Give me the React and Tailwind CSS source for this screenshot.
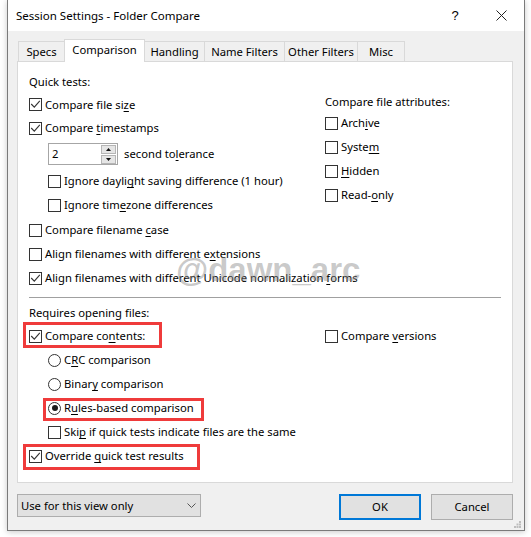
import React from "react";

function U({ children }) {
  return <span className="underline decoration-1 underline-offset-[2px]">{children}</span>;
}

function Box({ checked }) {
  return (
    <span className="w-[13px] h-[13px] border border-[#333333] bg-white flex items-center justify-center shrink-0">
      {checked && (
        <svg width="11" height="11" viewBox="0 0 11 11">
          <path d="M1.2 5 L4.3 8.2 L9.8 1.8" fill="none" stroke="#333333" strokeWidth="1.1" />
        </svg>
      )}
    </span>
  );
}

function Radio({ checked }) {
  return (
    <span className="w-[13px] h-[13px] rounded-full border border-[#333333] bg-white flex items-center justify-center shrink-0">
      {checked && <span className="w-[6px] h-[6px] rounded-full bg-[#1a1a1a]" />}
    </span>
  );
}

function Check({ checked, children, className = "", h = "h-[24px]" }) {
  return (
    <div className={`flex items-center ${h} ${className}`}>
      <Box checked={checked} />
      <span className="ml-[3px] whitespace-nowrap">{children}</span>
    </div>
  );
}

function RadioRow({ checked, children, className = "" }) {
  return (
    <div className={`flex items-center h-[24px] ${className}`}>
      <Radio checked={checked} />
      <span className="ml-[3px] whitespace-nowrap">{children}</span>
    </div>
  );
}

function Tab({ children, className }) {
  return (
    <div className={`flex items-center justify-center whitespace-nowrap ${className}`}>{children}</div>
  );
}

export default function App() {
  return (
    <div className="w-[531px] h-[537px] bg-white font-['Noto_Sans',sans-serif] text-[11.25px] text-black leading-none overflow-hidden">
      <div className="ml-[7px] w-[518px] h-[531px] border-x border-b border-[#7a7a7a] flex flex-col bg-[#f0f0f0] relative shadow-[0_1px_6px_rgba(0,0,0,0.22)]">
        {/* Title bar */}
        <div className="h-[31px] bg-white flex items-center shrink-0">
          <div className="pl-[8px] flex-1 text-[11.5px] whitespace-nowrap">Session Settings - Folder Compare</div>
          <div className="w-[46px] h-full flex items-center justify-center text-[13px] font-['DejaVu_Sans',sans-serif] pb-[1px]">
            <span className="font-['Liberation_Sans',sans-serif] text-[13px]">?</span>
          </div>
          <div className="w-[46px] h-full flex items-center justify-center">
            <svg width="11" height="11" viewBox="0 0 11 11">
              <path d="M0.5 0.5 L10.5 10.5 M10.5 0.5 L0.5 10.5" stroke="#222222" strokeWidth="1" />
            </svg>
          </div>
        </div>

        {/* Body */}
        <div className="flex flex-col pl-[9px] pr-[11px] pt-[8px]">
          {/* Tabs */}
          <div className="flex items-end h-[22px] pl-[1px]">
            <Tab className="w-[46px] h-[20px] border-t border-l border-[#d9d9d9] bg-[#f0f0f0]">Specs</Tab>
            <Tab className="w-[81px] h-[23px] -mb-px relative z-10 border-t border-x border-[#d9d9d9] bg-white pb-[2px]">Comparison</Tab>
            <Tab className="w-[59px] h-[20px] border-t border-[#d9d9d9] bg-[#f0f0f0]">Handling</Tab>
            <Tab className="w-[80px] h-[20px] border-t border-l border-[#d9d9d9] bg-[#f0f0f0]">Name Filters</Tab>
            <Tab className="w-[73px] h-[20px] border-t border-l border-[#d9d9d9] bg-[#f0f0f0]">Other Filters</Tab>
            <Tab className="w-[48px] h-[20px] border-t border-x border-[#d9d9d9] bg-[#f0f0f0]">Misc</Tab>
          </div>

          {/* Panel */}
          <div className="h-[422px] border border-[#d9d9d9] bg-white relative pl-[11px] pr-[11px] flex flex-col">
            <div className="flex">
              <div className="w-[296px] pt-[8px] flex flex-col">
                <div className="h-[23px] flex items-center">Quick tests:</div>
                <Check checked h="h-[23px]">
                  Compare file si<U>z</U>e
                </Check>
                <Check checked>
                  Compare <U>t</U>imestamps
                </Check>
                <div className="mt-[3px] h-[22px] ml-[19px] flex items-center">
                  <div className="w-[70px] h-[22px] border border-[#a6a6a6] bg-white flex items-center justify-between pl-[3px] pr-[1px]">
                    <span>2</span>
                    <div className="flex flex-col gap-[1px]">
                      <div className="w-[15px] h-[9px] bg-[#e5e5e5] border border-[#b5b5b5] flex items-center justify-center">
                        <svg width="5" height="3" viewBox="0 0 5 3"><path d="M0 3 L2.5 0 L5 3 Z" fill="#111111" /></svg>
                      </div>
                      <div className="w-[15px] h-[9px] bg-[#e5e5e5] border border-[#b5b5b5] flex items-center justify-center">
                        <svg width="5" height="3" viewBox="0 0 5 3"><path d="M0 0 L2.5 3 L5 0 Z" fill="#111111" /></svg>
                      </div>
                    </div>
                  </div>
                  <span className="ml-[6px] whitespace-nowrap">
                    second to<U>l</U>erance
                  </span>
                </div>
                <Check className="mt-[4px] ml-[19px]">
                  Ignore dayli<U>g</U>ht saving difference (1 hour)
                </Check>
                <Check className="ml-[19px]">
                  Ignore tim<U>e</U>zone differences
                </Check>
              </div>
              <div className="pt-[30px] flex flex-col">
                <div className="h-[19px] flex items-center whitespace-nowrap">Compare file attributes:</div>
                <Check>
                  Arch<U>i</U>ve
                </Check>
                <Check>
                  Syste<U>m</U>
                </Check>
                <Check>
                  <U>H</U>idden
                </Check>
                <Check>
                  Read-<U>o</U>nly
                </Check>
              </div>
            </div>

            <Check className="mt-[1px]">
              Compare filename <U>c</U>ase
            </Check>
            <Check>
              Align filenames with different e<U>x</U>tensions
            </Check>
            <Check checked>
              Align filenames with different Unicode normalization <U>f</U>orms
            </Check>

            <div className="mt-[7px] h-px bg-[#a0a0a0]" />

            <div className="mt-[4px] h-[22px] flex items-center">Requires opening files:</div>

            <div className="flex">
              <div className="w-[296px] flex flex-col">
                <div className="relative">
                  <Check checked>
                    Compare co<U>n</U>tents:
                  </Check>
                  <span className="absolute left-[-6px] top-[-2px] w-[139px] h-[26px] border-[3px] border-[#ef3b3b]" />
                </div>
                <RadioRow className="ml-[19px]">
                  C<U>R</U>C comparison
                </RadioRow>
                <RadioRow className="ml-[19px]">
                  Binar<U>y</U> comparison
                </RadioRow>
                <div className="relative ml-[19px]">
                  <RadioRow checked>
                    R<U>u</U>les-based comparison
                  </RadioRow>
                  <span className="absolute left-[-5px] top-[2px] w-[161px] h-[23px] border-[3px] border-[#ef3b3b]" />
                </div>
                <Check className="ml-[19px]">
                  Ski<U>p</U> if quick tests indicate files are the same
                </Check>
                <div className="relative">
                  <Check checked>
                    Override <U>q</U>uick test results
                  </Check>
                  <span className="absolute left-[-6px] top-[0px] w-[177px] h-[26px] border-[3px] border-[#ef3b3b]" />
                </div>
              </div>
              <div className="flex flex-col">
                <Check>
                  Compare <U>v</U>ersions
                </Check>
              </div>
            </div>

            {/* Watermark overlay */}
            <div className="absolute left-[158px] top-[191px] font-['Liberation_Sans',sans-serif] font-bold text-[33px] leading-none text-[rgba(135,135,135,0.45)] whitespace-nowrap pointer-events-none">
              @dawn_arc
            </div>
          </div>

          {/* Bottom row */}
          <div className="mt-[11px] flex items-start">
            <div className="w-[184px] h-[23px] border border-[#adadad] bg-[#e1e1e1] flex items-center justify-between pl-[3px] pr-[4px]">
              <span className="whitespace-nowrap">Use for this view only</span>
              <svg width="9" height="5" viewBox="0 0 9 5">
                <path d="M0.5 0.5 L4.5 4.5 L8.5 0.5" fill="none" stroke="#555555" strokeWidth="1" />
              </svg>
            </div>
            <div className="flex-1" />
            <div className="w-[82px] h-[26px] border-2 border-[#0078d7] bg-[#e1e1e1] flex items-center justify-center">OK</div>
            <div className="w-[82px] h-[26px] ml-[10px] border border-[#adadad] bg-[#e1e1e1] flex items-center justify-center">Cancel</div>
          </div>
        </div>

        {/* Resize grip */}
        <svg className="absolute right-[3px] bottom-[2px]" width="7" height="7" viewBox="0 0 7 7">
          <rect x="5" y="0" width="2" height="2" fill="#bdbdbd" />
          <rect x="5" y="2.5" width="2" height="2" fill="#bdbdbd" />
          <rect x="2.5" y="2.5" width="2" height="2" fill="#bdbdbd" />
          <rect x="5" y="5" width="2" height="2" fill="#bdbdbd" />
          <rect x="2.5" y="5" width="2" height="2" fill="#bdbdbd" />
          <rect x="0" y="5" width="2" height="2" fill="#bdbdbd" />
        </svg>
      </div>
    </div>
  );
}
